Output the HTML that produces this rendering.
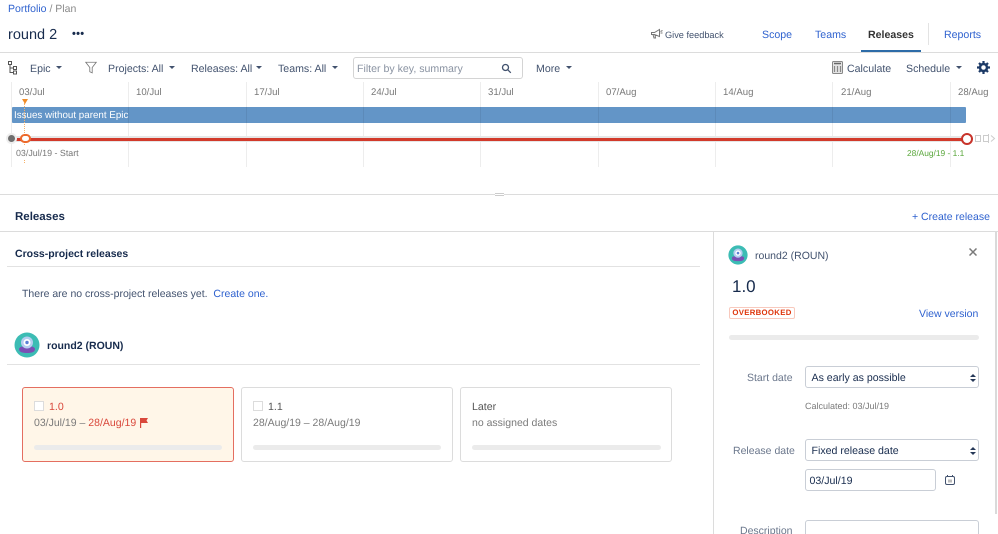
<!DOCTYPE html>
<html><head><meta charset="utf-8">
<style>
html,body{margin:0;padding:0;background:#fff}
#p{position:relative;width:998px;height:534px;overflow:hidden;font-family:"Liberation Sans",sans-serif;font-size:10.6px;color:#42526e;filter:blur(.35px);text-rendering:geometricPrecision}
#p div,#p span.a,#p svg.a{position:absolute}
.t{white-space:nowrap;line-height:14px;height:14px;margin-top:2px}
.b{color:#2f62cf}
.d{color:#172b4d}
.g{color:#7a7a7a}
.c{width:0;height:0;border-left:3px solid transparent;border-right:3px solid transparent;border-top:3px solid #42526e;margin-top:-1px}
.v{width:1px;background:rgba(0,0,0,.07);top:82px;height:85px}
.dl{top:84px;font-size:9.6px;color:#777}
.card{box-sizing:border-box;top:387px;height:75px;width:212px;border:1px solid #dcdcdc;border-radius:3px;background:#fff}
.bar{height:5px;border-radius:3px;background:#ebebeb}
.cb{box-sizing:border-box;width:10px;height:10px;border:1px solid #dcdcdc;background:#fff}
.sel{box-sizing:border-box;left:805px;width:174px;height:22px;border:1px solid #c9ced6;border-radius:3px;background:#fff;color:#172b4d;line-height:22px;padding-left:5.500px;font-size:10.6px}
.ar{left:970px;width:0;height:0;border-left:3px solid transparent;border-right:3px solid transparent}
</style></head><body>
<div id="p">
<div class="t" style="left:8px;top:0;color:#8a8a8a;font-size:10.5px"><span class="b">Portfolio</span> / Plan</div>
<div class="t d" style="left:8px;top:25px;font-size:14.5px;line-height:17px;height:17px">round 2</div>
<div class="t d" style="left:72px;top:25px;font-size:11px;font-weight:bold;letter-spacing:.3px">•••</div>

<svg class="a" style="left:650px;top:28px" width="14" height="12" viewBox="0 0 14 12" fill="none" stroke="#777" stroke-width="1"><path d="M1.500 4.500h3l5-3v7l-5-2h-3zM3 6.500l1 3.500h1.500l-.5-3M10.500 3.500l2-1M10.500 5h2"/></svg>
<div class="t" style="left:665px;top:26px;font-size:9.2px">Give feedback</div>
<div class="t b" style="left:762px;top:26px">Scope</div>
<div class="t b" style="left:815px;top:26px">Teams</div>
<div class="t" style="left:868px;top:26px;font-weight:bold;color:#333">Releases</div>
<div style="left:928px;top:23px;width:1px;height:22px;background:#e3e3e3"></div>
<div class="t b" style="left:944px;top:26px">Reports</div>
<div style="left:0;top:52px;width:998px;height:1px;background:#dcdcdc"></div>
<div style="left:861px;top:50px;width:60px;height:2px;background:#2d6ca8"></div>

<svg class="a" style="left:8px;top:61px" width="10" height="14" viewBox="0 0 10 14" fill="none" stroke="#555" stroke-width="1"><rect x=".5" y=".5" width="3" height="3"/><rect x="5.500" y="5.500" width="3" height="3"/><rect x="5.500" y="10" width="3" height="3"/><path d="M2 4v7.500h3.500M2 7h3.500"/></svg>
<div class="t" style="left:30px;top:60px">Epic</div><div class="c" style="left:56px;top:67px"></div>
<svg class="a" style="left:85px;top:61px" width="12" height="13" viewBox="0 0 13 13" fill="none" stroke="#777" stroke-width=".9"><path d="M.800.800h11.400L7.800 6.500v5.800l-2.600-1.200V6.500z"/></svg>
<div class="t" style="left:108px;top:60px">Projects: All</div><div class="c" style="left:169px;top:67px"></div>
<div class="t" style="left:191px;top:60px">Releases: All</div><div class="c" style="left:256px;top:67px"></div>
<div class="t" style="left:278px;top:60px">Teams: All</div><div class="c" style="left:332px;top:67px"></div>
<div style="box-sizing:border-box;left:353px;top:57px;width:170px;height:22px;border:1px solid #d4d4d4;border-radius:3px;background:#fff"></div>
<div class="t" style="left:357px;top:60px;color:#8a93a2">Filter by key, summary</div>
<svg class="a" style="left:501px;top:63px" width="11" height="11" viewBox="0 0 11 11" fill="none" stroke="#42526e" stroke-width="1.300"><circle cx="4.500" cy="4.500" r="3"/><path d="M6.800 6.800l3 3"/></svg>
<div class="t" style="left:536px;top:60px">More</div><div class="c" style="left:566px;top:67px"></div>
<svg class="a" style="left:832px;top:61px" width="11" height="13" viewBox="0 0 11 13"><rect x=".5" y=".5" width="10" height="12" rx="1" fill="#e4e4e4" stroke="#888"/><path d="M2 2.500h7" stroke="#666" stroke-width="1.500"/><path d="M2.500 5v6M5.500 5v6M8.500 5v6" stroke="#888" stroke-width="1.200"/></svg>
<div class="t" style="left:847px;top:60px">Calculate</div>
<div class="t" style="left:906px;top:60px">Schedule</div><div class="c" style="left:956px;top:67px"></div>
<svg class="a" style="left:977px;top:61px" width="13" height="13" viewBox="0 0 13 13"><circle cx="6.500" cy="6.500" r="3.500" fill="none" stroke="#1d3a66" stroke-width="2.500"/><path d="M6.500 0v13M0 6.500h13M2 2l9 9M11 2l-9 9" stroke="#1d3a66" stroke-width="2.200" stroke-dasharray="2.200 8.600 2.200"/></svg>

<div style="left:12px;top:107px;width:954px;height:16px;background:#6395c7;border-radius:1px"></div>
<div class="v" style="left:11px"></div><div class="v" style="left:128px"></div><div class="v" style="left:246px"></div><div class="v" style="left:363px"></div><div class="v" style="left:480px"></div><div class="v" style="left:598px"></div><div class="v" style="left:715px"></div><div class="v" style="left:832px"></div><div class="v" style="left:950px"></div>
<div class="t dl" style="left:19px">03/Jul</div><div class="t dl" style="left:136px">10/Jul</div><div class="t dl" style="left:254px">17/Jul</div><div class="t dl" style="left:371px">24/Jul</div><div class="t dl" style="left:488px">31/Jul</div><div class="t dl" style="left:606px">07/Aug</div><div class="t dl" style="left:723px">14/Aug</div><div class="t dl" style="left:841px">21/Aug</div><div class="t dl" style="left:958px">28/Aug</div>

<div class="t" style="left:14px;top:107px;color:#fff;font-size:9.8px">Issues without parent Epic</div>
<div style="left:24px;top:103px;width:0;height:60px;border-left:1px dotted #f6b26b"></div>
<div style="left:22px;top:99px;width:0;height:0;border-left:3px solid transparent;border-right:3px solid transparent;border-top:5px solid #f08c28"></div>
<div style="left:11px;top:136px;width:956px;height:6px;background:#e6e6e6"></div>
<div style="left:11px;top:138px;width:956px;height:2.500px;background:#d23a2b"></div>
<div style="box-sizing:border-box;left:6px;top:133px;width:11px;height:11px;border-radius:50%;background:#6e6e6e;border:2px solid #eee"></div>
<div style="box-sizing:border-box;left:20px;top:134px;width:11px;height:9px;border-radius:5px;background:#fff;border:2.500px solid #ed6a2c"></div>
<div style="box-sizing:border-box;left:961px;top:133px;width:12px;height:12px;border-radius:50%;background:#fff;border:2px solid #c8332a"></div>
<div style="box-sizing:border-box;left:975px;top:135px;width:6px;height:7px;border:1px solid #ccc"></div>
<div style="box-sizing:border-box;left:983px;top:135px;width:6px;height:7px;border:1px solid #ccc"></div>
<svg class="a" style="left:988px;top:134px" width="8" height="9" viewBox="0 0 8 9" fill="none" stroke="#ccc"><path d="M.5 0v9M3 1.500l3.500 3-3.500 3"/></svg>
<div class="t" style="left:16px;top:144px;font-size:8.9px;color:#777;background:#fff">03/Jul/19 - Start</div>
<div class="t" style="left:907px;top:144px;font-size:8.4px;color:#5aa73c">28/Aug/19 - 1.1</div>

<div style="left:0;top:194px;width:998px;height:1px;background:#dcdcdc"></div>
<div style="left:495px;top:193px;width:9px;height:3px;background:#fff;border-top:1px solid #ccc;border-bottom:1px solid #ccc;box-sizing:border-box"></div>
<div class="t d" style="left:15px;top:208px;font-weight:bold;font-size:11.5px">Releases</div>
<div class="t b" style="left:912px;top:208px;font-size:10.5px">+ Create release</div>
<div style="left:0;top:231px;width:998px;height:1px;background:#dcdcdc"></div>

<div class="t d" style="left:15px;top:245px;font-weight:bold;font-size:10.5px">Cross-project releases</div>
<div style="left:7px;top:266px;width:693px;height:1px;background:#e2e2e2"></div>
<div class="t" style="left:22px;top:285px;font-size:10.5px">There are no cross-project releases yet.&nbsp; <span class="b">Create one.</span></div>

<svg class="a" style="left:14px;top:332px" width="26" height="26" viewBox="0 0 26 26"><circle cx="13" cy="13" r="12.500" fill="#3cbcb4"/><path d="M5 17c0-4 16-4 16 0 0 3-3 4-8 4s-8-1-8-4z" fill="#7a4fb5"/><circle cx="13" cy="10.500" r="6" fill="#b6cdf0"/><circle cx="13" cy="10.500" r="3.500" fill="#fff"/><circle cx="13" cy="10.500" r="1.700" fill="#5a7fd6"/></svg>
<div class="t d" style="left:47px;top:337px;font-weight:bold;font-size:10.5px">round2 (ROUN)</div>
<div style="left:7px;top:364px;width:693px;height:1px;background:#e2e2e2"></div>

<div class="card" style="left:22px;background:#fff6e8;border-color:#e46e60"></div>
<div class="cb" style="left:34px;top:401px"></div>
<div class="t" style="left:49px;top:398px;color:#d9483b">1.0</div>
<div class="t g" style="left:34px;top:414px;font-size:10.5px">03/Jul/19 – <span style="color:#d9483b">28/Aug/19</span></div>
<svg class="a" style="left:140px;top:418px" width="8" height="10" viewBox="0 0 8 10"><path d="M0 0h8L6.500 2.500 8 5H1.200v5H0z" fill="#d9483b"/></svg>
<div class="bar" style="left:34px;top:445px;width:188px"></div>

<div class="card" style="left:241px"></div>
<div class="cb" style="left:253px;top:401px"></div>
<div class="t" style="left:268px;top:398px;color:#555">1.1</div>
<div class="t g" style="left:253px;top:414px;font-size:10.5px">28/Aug/19 – 28/Aug/19</div>
<div class="bar" style="left:253px;top:445px;width:188px"></div>

<div class="card" style="left:460px"></div>
<div class="t" style="left:472px;top:398px;color:#555">Later</div>
<div class="t g" style="left:472px;top:414px;font-size:10.5px">no assigned dates</div>
<div class="bar" style="left:472px;top:445px;width:189px"></div>

<div style="left:713px;top:232px;width:1px;height:302px;background:#dcdcdc"></div>
<div style="left:995px;top:232px;width:2px;height:282px;background:#dadada"></div>
<svg class="a" style="left:728px;top:245px" width="20" height="20" viewBox="0 0 26 26"><circle cx="13" cy="13" r="12.500" fill="#3cbcb4"/><path d="M5 17c0-4 16-4 16 0 0 3-3 4-8 4s-8-1-8-4z" fill="#7a4fb5"/><circle cx="13" cy="10.500" r="6" fill="#b6cdf0"/><circle cx="13" cy="10.500" r="3.500" fill="#fff"/><circle cx="13" cy="10.500" r="1.700" fill="#5a7fd6"/></svg>
<div class="t" style="left:755px;top:247px;font-size:10.5px">round2 (ROUN)</div>
<svg class="a" style="left:969px;top:248px" width="8" height="8" viewBox="0 0 8 8" stroke="#7a7a7a" stroke-width="1.500"><path d="M.5.500l7 7M7.500.500l-7 7"/></svg>
<div class="t d" style="left:732px;top:275px;font-size:17px;line-height:20px;height:20px">1.0</div>
<div class="t" style="box-sizing:border-box;left:729px;top:307px;width:66px;height:12px;line-height:10px;margin-top:0;border:1px solid #f8c9bd;border-radius:2px;color:#de350b;font-weight:bold;font-size:7.800px;letter-spacing:.3px;text-align:center">OVERBOOKED</div>
<div class="t b" style="left:919px;top:305px;font-size:10.5px">View version</div>
<div class="bar" style="left:729px;top:335px;width:250px"></div>

<div class="t" style="left:747px;top:369px;color:#6b778c;font-size:10.5px">Start date</div>
<div class="sel" style="top:366px">As early as possible</div>
<div class="ar" style="top:374px;border-bottom:3px solid #253858"></div><div class="ar" style="top:379px;border-top:3px solid #253858"></div>
<div class="t g" style="left:805px;top:397px;font-size:9px">Calculated: 03/Jul/19</div>
<div class="t" style="left:733px;top:442px;color:#6b778c;font-size:10.5px">Release date</div>
<div class="sel" style="top:439px">Fixed release date</div>
<div class="ar" style="top:447px;border-bottom:3px solid #253858"></div><div class="ar" style="top:452px;border-top:3px solid #253858"></div>
<div class="sel" style="top:469px;width:131px;padding-left:3.500px">03/Jul/19</div>
<svg class="a" style="left:945px;top:475px" width="10" height="10" viewBox="0 0 10 10" fill="none" stroke="#42526e"><rect x=".5" y="1.500" width="9" height="8" rx="1.500"/><path d="M2.500 0v2M7.500 0v2"/><rect x="3" y="4.500" width="4" height="3" fill="#bbb" stroke="none"/></svg>
<div class="t" style="left:740px;top:522px;color:#6b778c;font-size:10.5px">Description</div>
<div style="box-sizing:border-box;left:805px;top:520px;width:174px;height:30px;border:1px solid #c9ced6;border-radius:3px"></div>
</div>
</body></html>
